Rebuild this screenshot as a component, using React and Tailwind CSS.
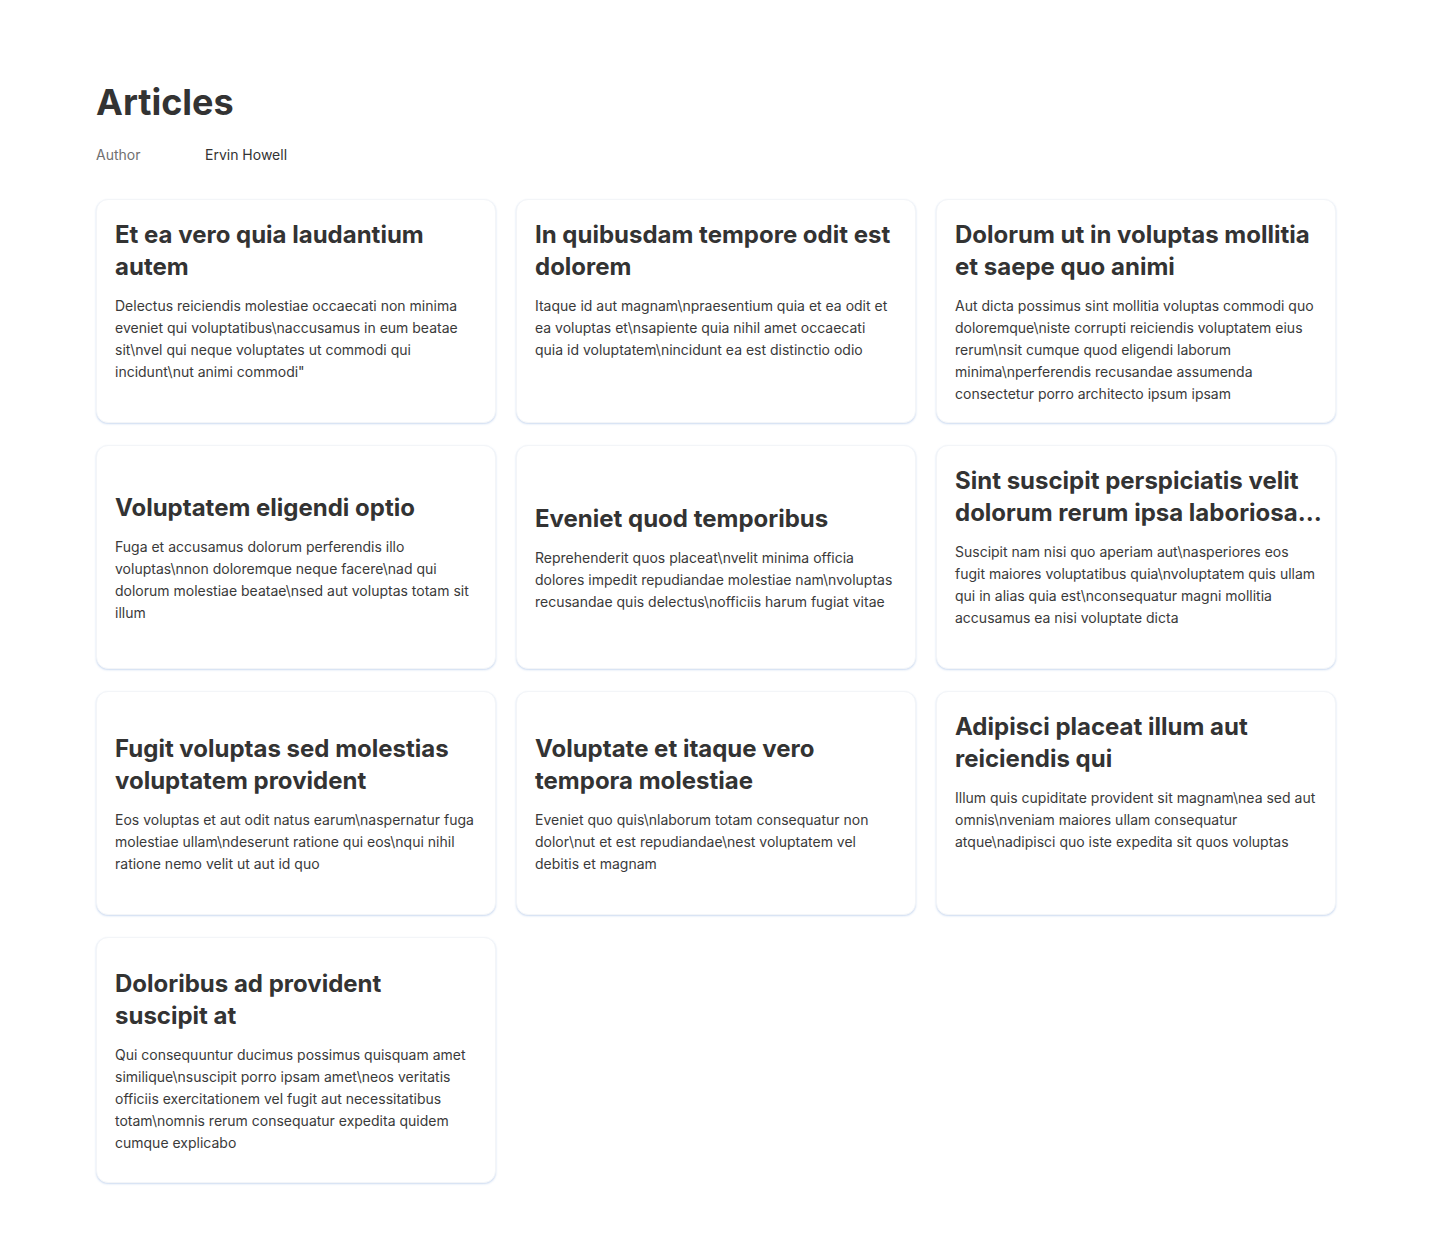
import React from "react";

const posts = [
  { t: "Et ea vero quia laudantium autem", b: 'Delectus reiciendis molestiae occaecati non minima eveniet qui voluptatibus\\naccusamus in eum beatae sit\\nvel qui neque voluptates ut commodi qui incidunt\\nut animi commodi"', c: false },
  { t: "In quibusdam tempore odit est dolorem", b: "Itaque id aut magnam\\npraesentium quia et ea odit et ea voluptas et\\nsapiente quia nihil amet occaecati quia id voluptatem\\nincidunt ea est distinctio odio", c: false },
  { t: "Dolorum ut in voluptas mollitia et saepe quo animi", b: "Aut dicta possimus sint mollitia voluptas commodi quo doloremque\\niste corrupti reiciendis voluptatem eius rerum\\nsit cumque quod eligendi laborum minima\\nperferendis recusandae assumenda consectetur porro architecto ipsum ipsam", c: false },
  { t: "Voluptatem eligendi optio", b: "Fuga et accusamus dolorum perferendis illo voluptas\\nnon doloremque neque facere\\nad qui dolorum molestiae beatae\\nsed aut voluptas totam sit illum", c: true },
  { t: "Eveniet quod temporibus", b: "Reprehenderit quos placeat\\nvelit minima officia dolores impedit repudiandae molestiae nam\\nvoluptas recusandae quis delectus\\nofficiis harum fugiat vitae", c: true },
  {
    t: (
      <>
        {"Sint suscipit perspiciatis velit "}
        <span className="whitespace-nowrap">dolorum rerum ipsa laboriosa…</span>
      </>
    ),
    b: "Suscipit nam nisi quo aperiam aut\\nasperiores eos fugit maiores voluptatibus quia\\nvoluptatem quis ullam qui in alias quia est\\nconsequatur magni mollitia accusamus ea nisi voluptate dicta",
    c: false,
  },
  { t: "Fugit voluptas sed molestias voluptatem provident", b: "Eos voluptas et aut odit natus earum\\naspernatur fuga molestiae ullam\\ndeserunt ratione qui eos\\nqui nihil ratione nemo velit ut aut id quo", c: true },
  { t: "Voluptate et itaque vero tempora molestiae", b: "Eveniet quo quis\\nlaborum totam consequatur non dolor\\nut et est repudiandae\\nest voluptatem vel debitis et magnam", c: true },
  { t: "Adipisci placeat illum aut reiciendis qui", b: "Illum quis cupiditate provident sit magnam\\nea sed aut omnis\\nveniam maiores ullam consequatur atque\\nadipisci quo iste expedita sit quos voluptas", c: false },
  { t: "Doloribus ad provident suscipit at", b: "Qui consequuntur ducimus possimus quisquam amet similique\\nsuscipit porro ipsam amet\\neos veritatis officiis exercitationem vel fugit aut necessitatibus totam\\nomnis rerum consequatur expedita quidem cumque explicabo", c: true, tall: true },
];

function Card({ p }) {
  return (
    <div
      className={
        "flex flex-col rounded-xl border border-[#f3f5f8] bg-white pl-[18px] pr-[19px] pt-[19px] pb-[17px] shadow-[0_1px_2px_0_rgba(50,110,200,0.25)] " +
        (p.c ? "justify-center " : "justify-start ") +
        (p.tall ? "h-[246px]" : "h-[224px]")
      }
    >
      <h2 className="max-w-[360px] shrink-0 text-[24px] font-bold leading-[32px] text-[#333333]">{p.t}</h2>
      <p className="mt-3 shrink-0 text-[14px] leading-[22px] text-[#3a3a3a]">{p.b}</p>
    </div>
  );
}

export default function App() {
  return (
    <div
      className="min-h-screen bg-white px-24 pt-[82px] pb-12"
      style={{ fontFamily: "Inter, 'Noto Sans', sans-serif" }}
    >
      <h1 className="text-[36px] font-bold leading-[40px] text-[#333333]">Articles</h1>
      <div className="mt-[23px] flex text-[14px] leading-[20px]">
        <span className="w-[109px] text-[#707070]">Author</span>
        <span className="text-[#333333]">Ervin Howell</span>
      </div>
      <div className="mt-[34px] grid w-[1240px] grid-cols-3 gap-x-5 gap-y-[22px]">
        {posts.map((p, i) => (
          <Card key={i} p={p} />
        ))}
      </div>
    </div>
  );
}
